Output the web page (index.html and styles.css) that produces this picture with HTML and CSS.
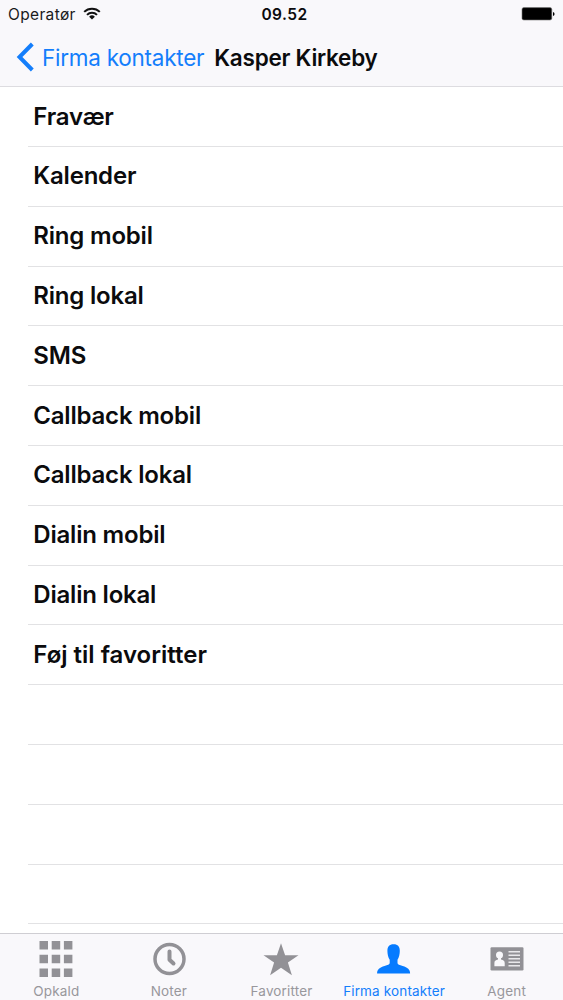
FILE: index.html
```html
<!DOCTYPE html>
<html lang="da">
<head>
<meta charset="utf-8">
<title>Kasper Kirkeby</title>
<link rel="stylesheet" href="styles.css">
</head>
<body>
<div class="screen">
  <header class="header">
    <div class="status">
      <div class="carrier"><span>Operatør</span>
        <svg class="wifi" width="18" height="13" viewBox="0 0 18 13"><g fill="none" stroke="#111" stroke-width="2"><path d="M1.2 4.9a11.2 11.2 0 0 1 15.6 0"/><path d="M4 7.9a7.1 7.1 0 0 1 10 0"/></g><path d="M9 12.6 6.1 9.7a4.1 4.1 0 0 1 5.8 0z" fill="#111"/></svg>
      </div>
      <time class="time">09.52</time>
      <svg class="battery" width="34" height="14" viewBox="0 0 34 14"><rect x="1" y=".6" width="29.8" height="12.4" rx="1.8" fill="#000" stroke="#777" stroke-width=".6"/><path d="M32 5q1.6 .5 1.6 2t-1.6 2z" fill="#000"/></svg>
    </div>
    <nav class="navbar">
      <svg class="chevron" width="18" height="30" viewBox="0 0 18 30"><path d="M16.3 2 3.5 15l12.8 13" fill="none" stroke="#147efb" stroke-width="4"/></svg>
      <a class="back">Firma kontakter</a>
      <h1 class="title">Kasper Kirkeby</h1>
    </nav>
  </header>
  <main class="list">
    <div class="row">Fravær</div>
    <div class="row">Kalender</div>
    <div class="row">Ring mobil</div>
    <div class="row">Ring lokal</div>
    <div class="row">SMS</div>
    <div class="row">Callback mobil</div>
    <div class="row">Callback lokal</div>
    <div class="row">Dialin mobil</div>
    <div class="row">Dialin lokal</div>
    <div class="row loose">Føj til favoritter</div>
    <div class="row"></div>
    <div class="row"></div>
    <div class="row"></div>
    <div class="row"></div>
  </main>
  <footer class="tabs">
    <div class="tab">
      <svg width="36" height="40" viewBox="0 0 36 40"><path fill="#929196" d="M1.5 2H10v8.5H1.500zM13.700 2h8.500v8.500h-8.500zM25.900 2h8.500v8.500h-8.500zM1.500 15.700H10v8.500H1.500zM13.700 15.700h8.500v8.500h-8.500zM25.900 15.700h8.500v8.500h-8.500zM1.500 29.400H10v8.500H1.500zM13.700 29.400h8.500v8.500h-8.500zM25.900 29.400h8.500v8.500h-8.500z"/></svg>
      <span>Opkald</span>
    </div>
    <div class="tab">
      <svg width="36" height="40" viewBox="0 0 36 40"><circle cx="18.500" cy="20" r="14.500" fill="none" stroke="#929196" stroke-width="3.500"/><path d="M18.500 12.500v8.200l4 3.800" fill="none" stroke="#929196" stroke-width="4" stroke-linecap="round" stroke-linejoin="round"/></svg>
      <span>Noter</span>
    </div>
    <div class="tab">
      <svg width="36" height="40" viewBox="0 0 36 40"><path fill="#929196" d="M18 4.300l4.100 11.900h13.400L24.900 23.600l4 12.600L18 28.800 7.100 36.200l4-12.600L.5 16.200h13.400z"/></svg>
      <span>Favoritter</span>
    </div>
    <div class="tab active">
      <svg width="36" height="40" viewBox="0 0 36 40"><path fill="#067bff" d="M17.600 5.200c4.400 0 6.200 2.600 6.200 6.500 0 3.500-.8 7-2.300 9v3.200c0 1.600 2 2 5.200 3 4.800 1.500 7.400 3.200 7.400 7.600H1.100c0-4.400 2.600-6.100 7.400-7.600 3.200-1 5.200-1.400 5.200-3v-3.200c-1.500-2-2.300-5.500-2.300-9 0-3.900 1.800-6.500 6.200-6.500z"/></svg>
      <span>Firma kontakter</span>
    </div>
    <div class="tab">
      <svg width="36" height="40" viewBox="0 0 36 40"><rect x="1.500" y="8.300" width="33" height="23.200" rx="1.200" fill="#929196"/><circle cx="10.500" cy="16" r="3.500" fill="#f9f8fb"/><path d="M9 18h3v2.400c2.500.8 3.700 1.200 3.700 3.500v3.400H5.400v-3.400c0-2.300 1.200-2.700 3.600-3.500z" fill="#f9f8fb"/><path d="M19.500 12.800h11.500M19.500 16.300h11.500M19.500 19.800h11.500M19.500 23.300h11.500M19.500 26.800h11.500" stroke="#e9e8eb" stroke-width="1.500"/></svg>
      <span>Agent</span>
    </div>
  </footer>
</div>
</body>
</html>
```
FILE: styles.css
```css
* { box-sizing: border-box; }
body { margin: 0; background: #fff; color: #0b0b0d; font-family: Inter, "Liberation Sans", sans-serif; }
.screen { width: 563px; height: 1000px; display: flex; flex-direction: column; overflow: hidden; }
.header { height: 87px; flex: none; background: #f9f8fb; border-bottom: 1px solid #dddce0; }
.status { height: 28px; padding: 0 8px; display: grid; grid-template-columns: 1fr auto 1fr; align-items: center; }
.carrier { display: flex; align-items: center; gap: 8px; font-size: 15.500px; letter-spacing: .35px; color: #1a1a1c; }
.wifi { margin: -2px 0 0 -1px; }
.time { font-size: 15.500px; font-weight: 560; letter-spacing: .45px; padding-left: 6px; }
.battery { justify-self: end; }
.navbar { height: 58px; display: flex; padding-left: 16px; align-items: center; white-space: nowrap; }
.chevron { flex: none; margin-right: 8px; }
.back { color: #147efb; font-size: 22.500px; letter-spacing: -.25px; }
.title { margin: 0 0 0 10px; font-size: 22.500px; font-weight: 560; letter-spacing: -.25px; }
.list { flex: 1; min-height: 0; overflow: hidden; padding: .3px 0 0 28px; }
.row { height: 59.800px; padding: 0 0 1px 5.300px; display: flex; align-items: center; font-size: 24px; font-weight: 560; letter-spacing: -.2px; border-bottom: 1px solid #e2e2e4; }
.loose { letter-spacing: 0; }
.tabs { height: 67px; flex: none; background: #f9f8fb; border-top: 1px solid #cfced3; display: grid; grid-template-columns: repeat(5, 112.600px); padding-top: 5px; }
.tab { display: flex; flex-direction: column; align-items: center; color: #98979c; font-size: 13.500px; line-height: 18px; letter-spacing: .15px; white-space: nowrap; }
.tab span { margin-top: 2.500px; }
.active { color: #147efb; }
```
